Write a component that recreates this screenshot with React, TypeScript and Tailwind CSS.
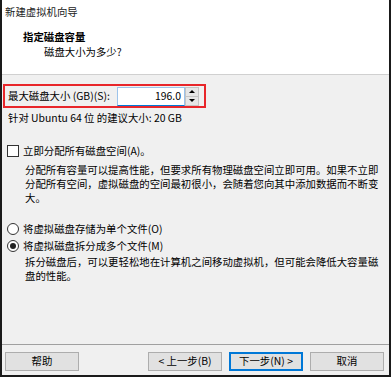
const FONT = "font-['Microsoft_YaHei','Noto_Sans_CJK_SC','Noto_Sans',sans-serif]"

function Button({ label, primary }: { label: string; primary?: boolean }) {
  return (
    <div
      className={`w-[74px] h-[19px] flex items-center justify-center bg-[#e1e1e1] text-black leading-none ${
        primary ? 'border-2 border-[#0078d7]' : 'border border-[#adadad]'
      }`}
    >
      {label}
    </div>
  )
}

export default function App() {
  return (
    <div
      className={`${FONT} w-[391px] h-[377px] flex flex-col bg-[#f0f0f0] border-l-2 border-r-2 border-b-2 border-[#1a1a1a] text-[10.4px] leading-[14px] text-black overflow-hidden`}
    >
      {/* Header */}
      <div className="h-[75px] shrink-0 bg-white border-b border-[#d0d0d0] pt-[5px] pl-[3px]">
        <div className="text-[#222]">新建虚拟机向导</div>
        <div className="mt-[11px] ml-[18px] font-bold">指定磁盘容量</div>
        <div className="mt-px ml-[39px]">磁盘大小为多少?</div>
      </div>

      {/* Body */}
      <div className="flex-1 flex flex-col">
        <div className="mt-[9px] ml-px w-[203px] h-[24px] border-2 border-[#e8262a] flex items-center">
          <div className="w-[112px] pl-[3px] shrink-0">最大磁盘大小 (GB)(S):</div>
          <div className="w-[68px] h-[19px] bg-white border border-[#9cc3ea] border-b-[#0078d7] flex items-center justify-end pr-[3px]">
            196.0
          </div>
          <div className="w-[14px] h-[19px] flex flex-col">
            <div className="flex-1 bg-[#e6e6e6] border border-[#c4c4c4] flex items-center justify-center">
              <div className="w-0 h-0 border-l-[3px] border-r-[3px] border-b-[3px] border-l-transparent border-r-transparent border-b-black" />
            </div>
            <div className="flex-1 bg-[#e6e6e6] border border-t-0 border-[#c4c4c4] flex items-center justify-center">
              <div className="w-0 h-0 border-l-[3px] border-r-[3px] border-t-[3px] border-l-transparent border-r-transparent border-t-black" />
            </div>
          </div>
        </div>

        <div className="mt-[3px] ml-[6px]">针对 Ubuntu 64 位 的建议大小: 20 GB</div>

        <div className="mt-[19px] ml-[5px] flex items-center gap-[4px]">
          <div className="w-[12px] h-[12px] bg-white border border-[#333]" />
          <span>立即分配所有磁盘空间(A)。</span>
        </div>
        <div className="mt-[5px] ml-[23px]">
          <div>分配所有容量可以提高性能，但要求所有物理磁盘空间立即可用。如果不立即</div>
          <div>分配所有空间，虚拟磁盘的空间最初很小，会随着您向其中添加数据而不断变</div>
          <div>大。</div>
        </div>

        <div className="mt-[17px] ml-[5px] flex items-center gap-[4px]">
          <div className="w-[12px] h-[12px] rounded-full bg-white border border-[#333]" />
          <span>将虚拟磁盘存储为单个文件(O)</span>
        </div>
        <div className="mt-[3px] ml-[5px] flex items-center gap-[4px]">
          <div className="w-[12px] h-[12px] rounded-full bg-white border border-[#333] flex items-center justify-center">
            <div className="w-[6px] h-[6px] rounded-full bg-[#222]" />
          </div>
          <span>将虚拟磁盘拆分成多个文件(M)</span>
        </div>
        <div className="mt-[2px] ml-[23px]">
          <div>拆分磁盘后，可以更轻松地在计算机之间移动虚拟机，但可能会降低大容量磁</div>
          <div>盘的性能。</div>
        </div>
      </div>

      {/* Footer */}
      <div className="h-[31px] shrink-0 border-t border-[#a0a0a0] pt-[7px] pl-[3px] pr-[5px] flex items-start justify-between">
        <Button label="帮助" />
        <div className="flex gap-[7px]">
          <Button label="< 上一步(B)" />
          <Button label="下一步(N) >" primary />
          <Button label="取消" />
        </div>
      </div>
    </div>
  )
}
